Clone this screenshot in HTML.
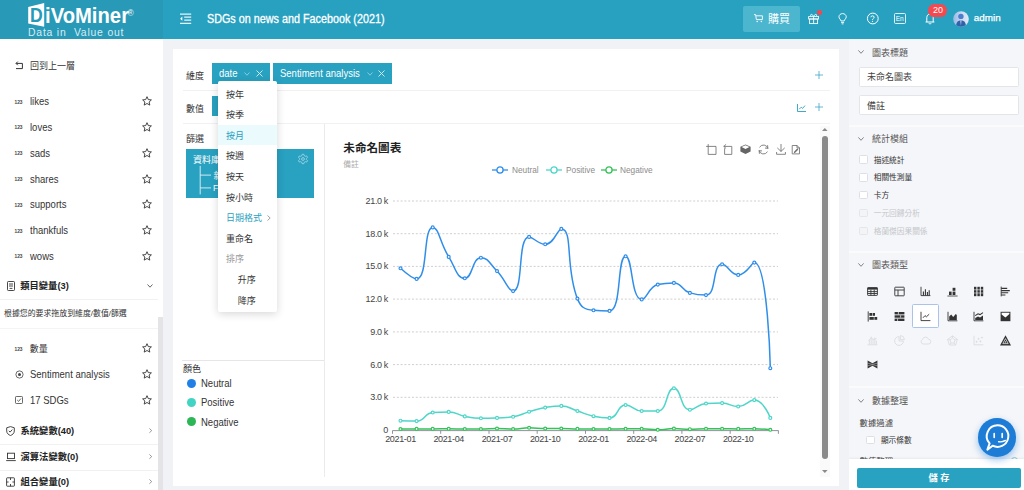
<!DOCTYPE html>
<html lang="zh-Hant">
<head>
<meta charset="utf-8">
<title>DiVoMiner</title>
<style>
*{box-sizing:border-box;margin:0;padding:0}
html,body{width:1024px;height:490px;overflow:hidden;background:#f0f2f5;font-family:"Liberation Sans","Noto Sans CJK TC",sans-serif;font-size:12px;color:#333}
.abs{position:absolute}
#hdr{position:absolute;left:0;top:0;width:1024px;height:39px;background:#28a1c1}
#hdr .logo{position:absolute;left:0;top:0;width:163px;height:39px;background:#2899b7}
#side{position:absolute;left:0;top:39px;width:163px;height:451px;background:#fff}
#card{position:absolute;left:173px;top:49px;width:666.4px;height:437px;background:#fff}
#right{position:absolute;left:849px;top:39px;width:175px;height:451px;background:#f5f6f9;overflow:hidden}
.t{position:absolute;white-space:nowrap;line-height:1}
svg{position:absolute;overflow:visible}
.lat{transform-origin:0 50%;transform:scaleX(0.905)}
.lat2{transform-origin:0 50%;transform:scaleX(0.92)}
.ax{font-family:"Liberation Sans",sans-serif;font-size:9px;fill:#444;letter-spacing:-0.35px}
</style>
</head>
<body>
<div id="hdr"><div class="logo"></div>
<!-- logo -->
<svg width="18" height="25" viewBox="0 0 18 25" style="left:27px;top:2px">
  <path d="M1.2 5 L17.2 1 L17.2 24.8 L1.2 21.6 Z" fill="#fff"/>
</svg>
<div class="t" id="lgD" style="left:29.6px;top:4.6px;font-size:20.5px;font-weight:bold;color:#2899b7;transform-origin:0 0;transform:scaleX(0.86)">D</div>
<div class="t" id="lg1" style="left:44.6px;top:5px;font-size:22.5px;font-weight:bold;color:#fff;transform-origin:0 0;transform:scaleX(0.9)">iVoMiner</div>
<div class="t" style="left:127.6px;top:8.6px;font-size:8.5px;color:#e6f4f8">®</div>
<div class="t" id="lg2" style="left:28px;top:28px;font-size:10.4px;color:#d6edf4;letter-spacing:0.8px">Data in&nbsp; Value out</div>
<!-- menu fold icon -->
<svg width="12" height="12" viewBox="0 0 12 12" style="left:179.8px;top:13px" fill="none" stroke="#e4f3f8" stroke-width="1.2">
  <path d="M0 1.1 H11.2 M4.2 4.2 H11.2 M4.2 7.2 H11.2 M0 10.3 H11.2"/><path d="M2.3 3.6 L0.2 5.7 L2.3 7.8 Z" fill="#fff" stroke="none"/>
</svg>
<div class="t" id="ttl" style="left:207px;top:12.6px;font-size:12.2px;color:#fff;-webkit-text-stroke:0.3px #fff;transform-origin:0 0;transform:scaleX(0.885)">SDGs on news and Facebook (2021)</div>
<!-- buy button -->
<div class="abs" style="left:743px;top:6px;width:57px;height:26px;background:#4db6cf;border-radius:2px"></div>
<svg width="10" height="9" viewBox="0 0 10 9" style="left:753.8px;top:14.4px" fill="none" stroke="#fff" stroke-width="0.9">
  <path d="M0 0.6 H1.6 L2.4 5.6 H8.4 V1.8 H1.9"/><circle cx="3.2" cy="7.4" r="0.75" fill="#fff" stroke="none"/><circle cx="7.4" cy="7.4" r="0.75" fill="#fff" stroke="none"/>
</svg>
<div class="t" style="left:768px;top:14.4px;font-size:11px;color:#fff">購買</div>
<!-- gift -->
<svg width="12" height="12" viewBox="0 0 12 12" style="left:808px;top:12.6px" fill="none" stroke="#fff" stroke-width="0.85">
  <rect x="0.6" y="3.6" width="10" height="2.4"/><rect x="1.6" y="6" width="8" height="4.6"/><path d="M5.6 3.6 V10.6"/>
  <path d="M5.6 3.4 C4 0.2 1.6 1.4 3 3.2 M5.6 3.4 C7.2 0.2 9.6 1.4 8.2 3.2"/>
</svg>
<div class="abs" style="left:817.4px;top:10.4px;width:4.4px;height:4.4px;border-radius:50%;background:#f5474e"></div>
<!-- bulb -->
<svg width="9.2" height="12" viewBox="0 0 10 13" style="left:837.6px;top:12.8px" fill="none" stroke="#fff" stroke-width="1">
  <path d="M3.2 8.6 C3.2 7 1 6.2 1 4.2 C1 2.2 2.8 0.6 5 0.6 C7.2 0.6 9 2.2 9 4.2 C9 6.2 6.8 7 6.8 8.6 Z"/><path d="M3.4 10.2 H6.6 M4 11.8 H6"/>
</svg>
<!-- help -->
<svg width="13" height="13" viewBox="0 0 13 13" style="left:866px;top:12.2px" fill="none" stroke="#fff" stroke-width="1">
  <circle cx="6.8" cy="6.5" r="5.4"/><path d="M4.8 5.2 C4.8 3.4 8.2 3.4 8.2 5.2 C8.2 6.4 6.5 6.4 6.5 7.8"/><circle cx="6.5" cy="9.4" r="0.6" fill="#fff" stroke="none"/>
</svg>
<!-- En -->
<div class="abs" style="left:894px;top:13px;width:11.5px;height:11px;border:1px solid rgba(255,255,255,0.85);border-radius:1.5px"></div>
<div class="t" style="left:895.8px;top:15.6px;font-size:6.5px;color:#fff;letter-spacing:-0.2px">En</div>
<!-- bell -->
<svg width="10" height="12" viewBox="0 0 10 12" style="left:924.5px;top:13px" fill="none" stroke="#fff" stroke-width="1">
  <path d="M0.6 9 H9.4 M1.8 9 V4.6 C1.8 2.4 3.2 1 5 1 C6.8 1 8.2 2.4 8.2 4.6 V9"/><path d="M3.8 10.2 C4.2 11.2 5.8 11.2 6.2 10.2"/>
</svg>
<div class="abs" style="left:928.4px;top:4.2px;width:18.8px;height:12.8px;border-radius:6.4px;background:#f6494f"></div>
<div class="t" style="left:933px;top:6.4px;font-size:9px;color:#fff">20</div>
<!-- avatar -->
<svg width="16" height="16" viewBox="0 0 16 16" style="left:953px;top:10.8px">
  <defs><clipPath id="avc"><circle cx="8" cy="8" r="7.8"/></clipPath><linearGradient id="avg" x1="0" y1="0" x2="1" y2="0"><stop offset="0" stop-color="#96b8e4"/><stop offset="0.55" stop-color="#cfdcf1"/><stop offset="1" stop-color="#dfe8f6"/></linearGradient></defs>
  <circle cx="8" cy="8" r="7.8" fill="url(#avg)"/>
  <g clip-path="url(#avc)"><circle cx="7.9" cy="5.4" r="2.7" fill="#4a7fd0"/><path d="M3 16 C3 10.8 5 9.4 8 9.4 C11 9.4 13 10.8 13 16 Z" fill="#2f62a8"/><path d="M7.2 9.6 L7.9 14.4 L8.6 9.6 Z" fill="#b9cdea"/></g>
</svg>
<div class="t" id="adm" style="left:973.8px;top:12.6px;font-size:9.9px;color:#fff;-webkit-text-stroke:0.25px #fff">admin</div>

</div>
<div id="side">
<svg width="9" height="9" viewBox="0 0 9 9" style="left:14.6px;top:21.9px" fill="none" stroke="#333" stroke-width="1"><path d="M1.2 2.4 H7.4 V7.6 H1"/><path d="M2.8 0.6 L1 2.4 L2.8 4.2"/></svg>
<div class="t " style="left:30.0px;top:23.1px;font-size:9px;">回到上一層</div>
<div class="t" style="left:14.6px;top:61.6px;font-size:4.8px;font-weight:bold;color:#444;letter-spacing:-0.1px">123</div>
<div class="t lat" style="left:29.7px;top:57.2px;font-size:10.5px;">likes</div>
<svg width="10" height="10" viewBox="0 0 10 10" style="left:141.8px;top:57.3px" fill="none" stroke="#333" stroke-width="0.9" stroke-linejoin="round"><path d="M5 0.7 L6.3 3.6 L9.4 3.9 L7.1 6 L7.8 9.1 L5 7.5 L2.2 9.1 L2.9 6 L0.6 3.9 L3.7 3.6 Z"/></svg>
<div class="t" style="left:14.6px;top:87.4px;font-size:4.8px;font-weight:bold;color:#444;letter-spacing:-0.1px">123</div>
<div class="t lat" style="left:29.7px;top:83.0px;font-size:10.5px;">loves</div>
<svg width="10" height="10" viewBox="0 0 10 10" style="left:141.8px;top:83.1px" fill="none" stroke="#333" stroke-width="0.9" stroke-linejoin="round"><path d="M5 0.7 L6.3 3.6 L9.4 3.9 L7.1 6 L7.8 9.1 L5 7.5 L2.2 9.1 L2.9 6 L0.6 3.9 L3.7 3.6 Z"/></svg>
<div class="t" style="left:14.6px;top:113.3px;font-size:4.8px;font-weight:bold;color:#444;letter-spacing:-0.1px">123</div>
<div class="t lat" style="left:29.7px;top:108.9px;font-size:10.5px;">sads</div>
<svg width="10" height="10" viewBox="0 0 10 10" style="left:141.8px;top:109.0px" fill="none" stroke="#333" stroke-width="0.9" stroke-linejoin="round"><path d="M5 0.7 L6.3 3.6 L9.4 3.9 L7.1 6 L7.8 9.1 L5 7.5 L2.2 9.1 L2.9 6 L0.6 3.9 L3.7 3.6 Z"/></svg>
<div class="t" style="left:14.6px;top:139.0px;font-size:4.8px;font-weight:bold;color:#444;letter-spacing:-0.1px">123</div>
<div class="t lat" style="left:29.7px;top:134.7px;font-size:10.5px;">shares</div>
<svg width="10" height="10" viewBox="0 0 10 10" style="left:141.8px;top:134.7px" fill="none" stroke="#333" stroke-width="0.9" stroke-linejoin="round"><path d="M5 0.7 L6.3 3.6 L9.4 3.9 L7.1 6 L7.8 9.1 L5 7.5 L2.2 9.1 L2.9 6 L0.6 3.9 L3.7 3.6 Z"/></svg>
<div class="t" style="left:14.6px;top:164.7px;font-size:4.8px;font-weight:bold;color:#444;letter-spacing:-0.1px">123</div>
<div class="t lat" style="left:29.7px;top:160.3px;font-size:10.5px;">supports</div>
<svg width="10" height="10" viewBox="0 0 10 10" style="left:141.8px;top:160.4px" fill="none" stroke="#333" stroke-width="0.9" stroke-linejoin="round"><path d="M5 0.7 L6.3 3.6 L9.4 3.9 L7.1 6 L7.8 9.1 L5 7.5 L2.2 9.1 L2.9 6 L0.6 3.9 L3.7 3.6 Z"/></svg>
<div class="t" style="left:14.6px;top:190.5px;font-size:4.8px;font-weight:bold;color:#444;letter-spacing:-0.1px">123</div>
<div class="t lat" style="left:29.7px;top:186.2px;font-size:10.5px;">thankfuls</div>
<svg width="10" height="10" viewBox="0 0 10 10" style="left:141.8px;top:186.2px" fill="none" stroke="#333" stroke-width="0.9" stroke-linejoin="round"><path d="M5 0.7 L6.3 3.6 L9.4 3.9 L7.1 6 L7.8 9.1 L5 7.5 L2.2 9.1 L2.9 6 L0.6 3.9 L3.7 3.6 Z"/></svg>
<div class="t" style="left:14.6px;top:216.2px;font-size:4.8px;font-weight:bold;color:#444;letter-spacing:-0.1px">123</div>
<div class="t lat" style="left:29.7px;top:211.9px;font-size:10.5px;">wows</div>
<svg width="10" height="10" viewBox="0 0 10 10" style="left:141.8px;top:211.9px" fill="none" stroke="#333" stroke-width="0.9" stroke-linejoin="round"><path d="M5 0.7 L6.3 3.6 L9.4 3.9 L7.1 6 L7.8 9.1 L5 7.5 L2.2 9.1 L2.9 6 L0.6 3.9 L3.7 3.6 Z"/></svg>
<svg width="8" height="10" viewBox="0 0 8 10" style="left:6.8px;top:242.1px" fill="none" stroke="#333" stroke-width="0.9"><rect x="0.5" y="0.5" width="7" height="9" rx="0.8"/><path d="M2 3 H6 M2 5 H6 M2.6 7.4 H5.4"/></svg>
<div class="t " style="left:20.2px;top:243.4px;font-size:9.3px;font-weight:bold;color:#222">類目變量(3)</div>
<svg width="6" height="4" viewBox="0 0 6 4" style="left:147px;top:245.1px" fill="none" stroke="#555" stroke-width="0.9"><path d="M0.5 0.5 L3 3.2 L5.5 0.5"/></svg>
<div class="abs" style="left:0;top:260.0px;width:158px;height:1px;background:#f1f1f1"></div>
<div class="t " style="left:4.0px;top:271.3px;font-size:7.9px;color:#333">根據您的要求拖放到維度/數值/篩選</div>
<div class="abs" style="left:0;top:288.5px;width:158px;height:1px;background:#f4f4f4"></div>
<div class="abs" style="left:158px;top:278.0px;width:5px;height:174px;background:#e4e4e6"></div>
<div class="t" style="left:14.6px;top:308.6px;font-size:4.8px;font-weight:bold;color:#444;letter-spacing:-0.1px">123</div>
<div class="t " style="left:29.8px;top:305.9px;font-size:9px;">數量</div>
<svg width="10" height="10" viewBox="0 0 10 10" style="left:141.8px;top:304.3px" fill="none" stroke="#333" stroke-width="0.9" stroke-linejoin="round"><path d="M5 0.7 L6.3 3.6 L9.4 3.9 L7.1 6 L7.8 9.1 L5 7.5 L2.2 9.1 L2.9 6 L0.6 3.9 L3.7 3.6 Z"/></svg>
<svg width="9" height="9" viewBox="0 0 9 9" style="left:14.5px;top:331.0px" fill="none" stroke="#444" stroke-width="0.8"><circle cx="4.5" cy="4.5" r="3.6"/><circle cx="4.5" cy="4.5" r="1.5" fill="#444" stroke="none"/></svg>
<div class="t lat" style="left:29.7px;top:330.2px;font-size:10.5px;">Sentiment analysis</div>
<svg width="10" height="10" viewBox="0 0 10 10" style="left:141.8px;top:330.3px" fill="none" stroke="#333" stroke-width="0.9" stroke-linejoin="round"><path d="M5 0.7 L6.3 3.6 L9.4 3.9 L7.1 6 L7.8 9.1 L5 7.5 L2.2 9.1 L2.9 6 L0.6 3.9 L3.7 3.6 Z"/></svg>
<svg width="8" height="8" viewBox="0 0 8 8" style="left:15px;top:357.2px" fill="none" stroke="#444" stroke-width="0.8"><rect x="0.5" y="0.5" width="7" height="7" rx="0.8"/><path d="M2.2 4 L3.6 5.4 L5.9 2.6"/></svg>
<div class="t lat" style="left:29.7px;top:355.9px;font-size:10.5px;">17 SDGs</div>
<svg width="10" height="10" viewBox="0 0 10 10" style="left:141.8px;top:356.0px" fill="none" stroke="#333" stroke-width="0.9" stroke-linejoin="round"><path d="M5 0.7 L6.3 3.6 L9.4 3.9 L7.1 6 L7.8 9.1 L5 7.5 L2.2 9.1 L2.9 6 L0.6 3.9 L3.7 3.6 Z"/></svg>
<svg width="9" height="10" viewBox="0 0 9 10" style="left:6.4px;top:386.7px" fill="none" stroke="#333" stroke-width="0.9"><path d="M4.5 0.6 L8.3 1.8 V5 C8.3 7.4 6.4 8.8 4.5 9.5 C2.6 8.8 0.7 7.4 0.7 5 V1.8 Z"/><path d="M2.8 4.8 L4.1 6.1 L6.3 3.6"/></svg><div class="t " style="left:20.5px;top:388.0px;font-size:9.3px;font-weight:bold;color:#222">系統變數(40)</div><svg width="3.4" height="5.2" viewBox="0 0 4 6" style="left:148.6px;top:388.7px" fill="none" stroke="#777" stroke-width="0.9"><path d="M0.5 0.5 L3.2 3 L0.5 5.5"/></svg>
<div class="abs" style="left:0;top:404.6px;width:158px;height:1px;background:#f1f1f1"></div>
<svg width="10" height="10" viewBox="0 0 10 10" style="left:6px;top:412.7px" fill="none" stroke="#333" stroke-width="0.9"><rect x="1.5" y="1.2" width="7" height="5.4"/><path d="M0.2 8.6 H9.8"/></svg><div class="t " style="left:20.5px;top:414.0px;font-size:9.3px;font-weight:bold;color:#222">演算法變數(0)</div><svg width="3.4" height="5.2" viewBox="0 0 4 6" style="left:148.6px;top:414.7px" fill="none" stroke="#777" stroke-width="0.9"><path d="M0.5 0.5 L3.2 3 L0.5 5.5"/></svg>
<div class="abs" style="left:0;top:430.6px;width:158px;height:1px;background:#f1f1f1"></div>
<svg width="9" height="10" viewBox="0 0 9 10" style="left:6.4px;top:438.0px" fill="none" stroke="#333" stroke-width="0.9"><rect x="0.6" y="0.8" width="7.8" height="8.4" rx="0.6"/><path d="M4.5 0.8 V3 M4.5 7 V9.2 M0.6 5 H2.6 M6.4 5 H8.4"/></svg><div class="t " style="left:20.5px;top:439.3px;font-size:9.3px;font-weight:bold;color:#222">組合變量(0)</div><svg width="3.4" height="5.2" viewBox="0 0 4 6" style="left:148.6px;top:440.0px" fill="none" stroke="#777" stroke-width="0.9"><path d="M0.5 0.5 L3.2 3 L0.5 5.5"/></svg>
</div>
<div id="card">
<div class="t " style="left:13.1px;top:22.6px;font-size:9px;">維度</div>
<div class="abs" style="left:39.0px;top:14.0px;width:58.0px;height:21.0px;background:#29a1c0"></div>
<div class="t lat" style="left:45.7px;top:19.3px;font-size:10.5px;color:#fff">date</div>
<svg width="6" height="4" viewBox="0 0 6 4" style="left:71.0px;top:22.8px" fill="none" stroke="#8fd0e2" stroke-width="0.9"><path d="M0.5 0.5 L3 3.2 L5.5 0.5"/></svg>
<svg width="7" height="7" viewBox="0 0 7 7" style="left:82.6px;top:21.0px" fill="none" stroke="#d9f0f6" stroke-width="0.9"><path d="M0.5 0.5 L6.5 6.5 M6.5 0.5 L0.5 6.5"/></svg>
<div class="abs" style="left:100.0px;top:14.0px;width:119.0px;height:21.0px;background:#29a1c0"></div>
<div class="t lat" style="left:106.8px;top:19.3px;font-size:10.5px;color:#fff">Sentiment analysis</div>
<svg width="6" height="4" viewBox="0 0 6 4" style="left:193.6px;top:22.8px" fill="none" stroke="#8fd0e2" stroke-width="0.9"><path d="M0.5 0.5 L3 3.2 L5.5 0.5"/></svg>
<svg width="7" height="7" viewBox="0 0 7 7" style="left:205.0px;top:21.0px" fill="none" stroke="#d9f0f6" stroke-width="0.9"><path d="M0.5 0.5 L6.5 6.5 M6.5 0.5 L0.5 6.5"/></svg>
<svg width="8" height="8" viewBox="0 0 8 8" style="left:641.5px;top:21.5px" fill="none" stroke="#3aa6c5" stroke-width="0.8"><path d="M4 0 V8 M0 4 H8"/></svg>
<div class="abs" style="left:9.5px;top:41.3px;width:647.5px;height:1.2px;background:#f1f1f1"></div>
<div class="t " style="left:13.1px;top:55.6px;font-size:9px;">數值</div>
<div class="abs" style="left:39.0px;top:47.1px;width:48.0px;height:20.0px;background:#29a1c0"></div>
<svg width="9" height="8" viewBox="0 0 9 8" style="left:623.5px;top:54.5px" fill="none" stroke="#2f9fc0" stroke-width="0.9"><path d="M0.5 0 V7.5 H9"/><path d="M2.2 5.2 L4.2 3.2 L5.6 4.4 L8 1.6"/></svg>
<svg width="8" height="8" viewBox="0 0 8 8" style="left:641.5px;top:54.2px" fill="none" stroke="#3aa6c5" stroke-width="0.8"><path d="M4 0 V8 M0 4 H8"/></svg>
<div class="abs" style="left:9.5px;top:74.3px;width:647.0px;height:1.1px;background:#f1f1f1"></div>
<div class="t " style="left:13.1px;top:85.8px;font-size:9px;">篩選</div>
<div class="abs" style="left:13.1px;top:99.8px;width:128.1px;height:48.9px;background:#29a1c0"></div>
<div class="t " style="left:19.9px;top:106.5px;font-size:9px;color:#fff">資料庫</div>
<svg width="14" height="30" viewBox="0 0 14 30" style="left:26.0px;top:116.0px" fill="none" stroke="#e2f3f8" stroke-width="0.9"><path d="M1.2 0.9 V29.4 M1.2 10.1 H12 M1.2 22.9 H12"/></svg>
<div class="t " style="left:40.4px;top:122.5px;font-size:9px;color:#fff">新聞</div>
<div class="t lat" style="left:40.4px;top:134.2px;font-size:9.5px;color:#fff">Facebook</div>
<svg width="10" height="10" viewBox="0 0 10 10" style="left:125.2px;top:105.1px" fill="none" stroke="#a9dbe8" stroke-width="0.8" stroke-linejoin="round"><circle cx="5" cy="5" r="1.4"/><path d="M4.20 0.27 L5.80 0.27 L6.22 1.72 L7.23 2.30 L8.70 1.94 L9.50 3.33 L8.45 4.42 L8.45 5.58 L9.50 6.67 L8.70 8.06 L7.23 7.70 L6.22 8.28 L5.80 9.73 L4.20 9.73 L3.78 8.28 L2.77 7.70 L1.30 8.06 L0.50 6.67 L1.55 5.58 L1.55 4.42 L0.50 3.33 L1.30 1.94 L2.77 2.30 L3.78 1.72 Z"/></svg>
<div class="abs" style="left:150.8px;top:74.8px;width:1.0px;height:353.4px;background:#ebebeb"></div>
<div class="abs" style="left:9.2px;top:310.7px;width:141.8px;height:1.0px;background:#e6e6e6"></div>
<div class="t " style="left:10.1px;top:315.9px;font-size:9px;">顏色</div>
<div class="abs" style="left:13.8px;top:329.6px;width:9.2px;height:9.2px;background:#2080e5;border-radius:50%"></div>
<div class="t lat" style="left:28.2px;top:328.9px;font-size:10.5px;">Neutral</div>
<div class="abs" style="left:13.8px;top:348.9px;width:9.2px;height:9.2px;background:#42d4c3;border-radius:50%"></div>
<div class="t lat" style="left:28.2px;top:348.2px;font-size:10.5px;">Positive</div>
<div class="abs" style="left:13.8px;top:368.2px;width:9.2px;height:9.2px;background:#2db656;border-radius:50%"></div>
<div class="t lat" style="left:28.2px;top:367.6px;font-size:10.5px;">Negative</div>
<div class="t " style="left:170.3px;top:93.3px;font-size:11.6px;font-weight:bold;color:#222">未命名圖表</div>
<div class="t " style="left:170.3px;top:112.0px;font-size:7.8px;color:#aaa">備註</div>
<svg width="11" height="11" viewBox="0 0 11 11" style="left:533.0px;top:95.2px" fill="none" stroke="#707070" stroke-width="0.85" stroke-linejoin="round" stroke-linecap="round"><path d="M0.5 2.4 H10 V10.4 H2.2 V0.5"/></svg>
<svg width="10" height="11" viewBox="0 0 10 11" style="left:550.4px;top:95.2px" fill="none" stroke="#707070" stroke-width="0.85" stroke-linejoin="round" stroke-linecap="round"><path d="M1.6 4.6 V10.4 H8.8 V2.4 H1"/><path d="M2.8 0.6 L0.8 2.4 L2.8 4.2"/></svg>
<svg width="11" height="10.5" viewBox="0 0 11 10.5" style="left:566.8px;top:95.2px" ><path d="M5.5 0.4 L10.6 2.8 V7.4 L5.5 10.1 L0.4 7.4 V2.8 Z" fill="#666" stroke="none"/><path d="M5.5 1.3 L9.4 3.1 L5.5 5 L1.6 3.1 Z" fill="#fff" stroke="none"/></svg>
<svg width="11" height="11" viewBox="0 0 11 11" style="left:584.8px;top:94.9px" fill="none" stroke="#707070" stroke-width="0.85" stroke-linejoin="round" stroke-linecap="round"><path d="M9.9 4.3 A4.6 4.6 0 0 0 1.7 3 M1.1 6.7 A4.6 4.6 0 0 0 9.3 8"/><path d="M9.6 1.6 L9.9 4.3 L7.4 4.1" /><path d="M1.4 9.4 L1.1 6.7 L3.6 6.9"/></svg>
<svg width="10" height="11" viewBox="0 0 10 11" style="left:602.8px;top:95.2px" fill="none" stroke="#707070" stroke-width="0.85" stroke-linejoin="round" stroke-linecap="round"><path d="M5 0.4 V7.2 M1.6 4.2 L5 7.4 L8.4 4.2 M0.6 8.4 V10.3 H9.4 V8.4"/></svg>
<svg width="8" height="9.4" viewBox="0 0 8 9.4" style="left:619.4px;top:96.0px" fill="none" stroke="#707070" stroke-width="0.85" stroke-linejoin="round" stroke-linecap="round"><path d="M0.6 0.5 H5 L7.5 3 V8.9 H0.6 Z"/><path d="M5 0.5 V3 H7.5"/><path d="M2.6 7.2 L5.4 4.4" stroke-width="1.5"/></svg>
<svg width="16" height="8" viewBox="0 0 16 8" style="left:318.9px;top:116.8px" fill="none" stroke="#2f8ee9" stroke-width="1.3"><path d="M0 4 H16"/><circle cx="8" cy="4" r="3.1" fill="#fff"/></svg>
<div class="t lat2" style="left:338.7px;top:117.2px;font-size:9px;color:#8c8c8c">Neutral</div>
<svg width="16" height="8" viewBox="0 0 16 8" style="left:372.9px;top:116.8px" fill="none" stroke="#4fd6c8" stroke-width="1.3"><path d="M0 4 H16"/><circle cx="8" cy="4" r="3.1" fill="#fff"/></svg>
<div class="t lat2" style="left:392.9px;top:117.2px;font-size:9px;color:#8c8c8c">Positive</div>
<svg width="16" height="8" viewBox="0 0 16 8" style="left:427.5px;top:116.8px" fill="none" stroke="#35c25a" stroke-width="1.3"><path d="M0 4 H16"/><circle cx="8" cy="4" r="3.1" fill="#fff"/></svg>
<div class="t lat2" style="left:447.4px;top:117.2px;font-size:9px;color:#8c8c8c">Negative</div>
<div class="abs" style="left:646.8px;top:77.0px;width:9.8px;height:351.1px;background:#fafafa"></div>
<div class="abs" style="left:649.0px;top:86.6px;width:5.5px;height:323.5px;background:#8a8a8a;border-radius:3px"></div>
<svg width="5.6" height="3" viewBox="0 0 6 3" style="left:649.0px;top:78.9px" ><path d="M0 3 L3 0 L6 3 Z" fill="#8a8a8a"/></svg>
<svg width="5.6" height="3" viewBox="0 0 6 3" style="left:649.0px;top:421.2px" ><path d="M0 0 L3 3 L6 0 Z" fill="#8a8a8a"/></svg>
</div>
<div id="right">
<svg width="6" height="4" viewBox="0 0 6 4" style="left:8.6px;top:11.4px" fill="none" stroke="#666" stroke-width="0.8"><path d="M0.4 0.4 L3 3.3 L5.6 0.4"/></svg><div class="t " style="left:22.9px;top:9.5px;font-size:9px;color:#555">圖表標題</div>
<div class="abs" style="left:10.3px;top:27.5px;width:159.6px;height:20.0px;background:#fff;border:1px solid #e3e5e8;border-radius:1.5px"></div>
<div class="t " style="left:18.0px;top:34.4px;font-size:9px;color:#444">未命名圖表</div>
<div class="abs" style="left:10.3px;top:55.5px;width:159.6px;height:20.2px;background:#fff;border:1px solid #e3e5e8;border-radius:1.5px"></div>
<div class="t " style="left:18.0px;top:63.0px;font-size:9px;color:#444">備註</div>
<div class="abs" style="left:0.0px;top:85.6px;width:175.0px;height:2.0px;background:#fbfbfc"></div>
<svg width="6" height="4" viewBox="0 0 6 4" style="left:8.6px;top:98.1px" fill="none" stroke="#666" stroke-width="0.8"><path d="M0.4 0.4 L3 3.3 L5.6 0.4"/></svg><div class="t " style="left:22.9px;top:96.2px;font-size:9px;color:#555">統計模組</div>
<div class="abs" style="left:10.4px;top:116.2px;width:8.6px;height:8.6px;background:#fff;border:1px solid #dcdfe6;border-radius:1.5px"></div>
<div class="t " style="left:24.7px;top:117.5px;font-size:7.7px;color:#333">描述統計</div>
<div class="abs" style="left:10.4px;top:134.0px;width:8.6px;height:8.6px;background:#fff;border:1px solid #dcdfe6;border-radius:1.5px"></div>
<div class="t " style="left:24.7px;top:135.3px;font-size:7.7px;color:#333">相關性測量</div>
<div class="abs" style="left:10.4px;top:151.9px;width:8.6px;height:8.6px;background:#fff;border:1px solid #dcdfe6;border-radius:1.5px"></div>
<div class="t " style="left:24.7px;top:153.2px;font-size:7.7px;color:#333">卡方</div>
<div class="abs" style="left:10.4px;top:169.8px;width:8.6px;height:8.6px;background:#f3f4f6;border:1px solid #e4e6ea;border-radius:1.5px"></div>
<div class="t " style="left:24.7px;top:171.1px;font-size:7.7px;color:#c4c6ca">一元回歸分析</div>
<div class="abs" style="left:10.4px;top:187.8px;width:8.6px;height:8.6px;background:#f3f4f6;border:1px solid #e4e6ea;border-radius:1.5px"></div>
<div class="t " style="left:24.7px;top:189.1px;font-size:7.7px;color:#c4c6ca">格蘭傑因果關係</div>
<div class="abs" style="left:0.0px;top:211.7px;width:175.0px;height:2.0px;background:#fbfbfc"></div>
<svg width="6" height="4" viewBox="0 0 6 4" style="left:8.6px;top:223.9px" fill="none" stroke="#666" stroke-width="0.8"><path d="M0.4 0.4 L3 3.3 L5.6 0.4"/></svg><div class="t " style="left:22.9px;top:222.0px;font-size:9px;color:#555">圖表類型</div>
<div class="abs" style="left:63.2px;top:265.2px;width:26.6px;height:24.3px;background:#fff;border:1px solid #a9c4e8;border-radius:1.5px"></div>
<svg width="11" height="11" viewBox="0 0 11 11" style="left:18.0px;top:247.1px" fill="none" stroke="#333" stroke-width="0.9"><rect x="0.6" y="1.6" width="9.8" height="7.8" rx="0.5"/><rect x="0.6" y="1.6" width="9.8" height="2" fill="#333" stroke="none"/><path d="M0.6 5.6 H10.4 M0.6 7.5 H10.4 M3.9 3.6 V9.4 M7.2 3.6 V9.4"/></svg>
<svg width="11" height="11" viewBox="0 0 11 11" style="left:44.5px;top:247.1px" fill="none" stroke="#333" stroke-width="0.9"><rect x="0.8" y="1.2" width="9.4" height="8.6" rx="0.5"/><path d="M0.8 4 H10.2 M4 4 V9.8"/></svg>
<svg width="11" height="11" viewBox="0 0 11 11" style="left:71.2px;top:247.1px" fill="none" stroke="#333" stroke-width="0.9"><path d="M1 0.8 V9.6 H10.4"/><path d="M3.4 9.4 V5.4 M5.4 9.4 V3.2 M7.4 9.4 V6 M9.2 9.4 V4.2" stroke-width="1.1"/></svg>
<svg width="11" height="11" viewBox="0 0 11 11" style="left:97.9px;top:247.1px" ><path d="M0.4 10 H10.6" fill="none" stroke="#333" stroke-width="0.8"/><rect x="2" y="5.6" width="2.6" height="3.4" fill="#333"/><rect x="5.6" y="5.6" width="2.8" height="3.4" fill="#333"/><rect x="5.6" y="1.8" width="2.8" height="3" fill="#333"/></svg>
<svg width="11" height="11" viewBox="0 0 11 11" style="left:124.4px;top:247.1px" ><rect x="1" y="0.8" width="2.4" height="9.4" fill="#333"/><rect x="4.4" y="0.8" width="2.4" height="9.4" fill="#333"/><rect x="7.8" y="0.8" width="2.4" height="9.4" fill="#333"/><path d="M1 3.8 H10.2 M1 7 H10.2" stroke="#f5f6f9" stroke-width="0.6"/></svg>
<svg width="11" height="11" viewBox="0 0 11 11" style="left:150.9px;top:247.1px" fill="none" stroke="#333" stroke-width="0.9"><path d="M1.2 0.6 V10.4"/><path d="M1.2 2.4 H7.2 M1.2 4.6 H9.8 M1.2 6.8 H8.2 M1.2 9 H5.4" stroke-width="1.1"/></svg>
<svg width="11" height="11" viewBox="0 0 11 11" style="left:18.0px;top:271.8px" ><path d="M1.2 0.4 V10.6" fill="none" stroke="#333" stroke-width="0.9"/><rect x="2.4" y="2" width="3" height="2.8" fill="#333"/><rect x="6" y="2" width="2" height="2.8" fill="#333"/><rect x="2.4" y="6" width="4.4" height="2.8" fill="#333"/><rect x="7.4" y="6" width="2.8" height="2.8" fill="#333"/></svg>
<svg width="11" height="11" viewBox="0 0 11 11" style="left:44.5px;top:271.8px" ><rect x="0.6" y="1" width="9.8" height="2.4" fill="#333"/><rect x="0.6" y="4.3" width="9.8" height="2.4" fill="#333"/><rect x="0.6" y="7.6" width="9.8" height="2.4" fill="#333"/><path d="M4.4 1 V3.4 M6.6 4.3 V6.7 M3.6 7.6 V10" stroke="#f5f6f9" stroke-width="0.7"/></svg>
<svg width="11" height="11" viewBox="0 0 11 11" style="left:71.2px;top:271.8px" fill="none" stroke="#333" stroke-width="0.9"><path d="M1 0.8 V9.6 H10.4"/><path d="M3 6.8 L5 4.6 L6.4 5.8 L9.2 3.2"/></svg>
<svg width="11" height="11" viewBox="0 0 11 11" style="left:97.9px;top:271.8px" ><path d="M1 0.8 V9.8 H10.4" fill="none" stroke="#333" stroke-width="0.9"/><path d="M2.2 9 V5.6 L4.2 3.6 L6.2 6 L8.8 3 L9.8 4 V9 Z" fill="#333"/></svg>
<svg width="11" height="11" viewBox="0 0 11 11" style="left:124.4px;top:271.8px" ><path d="M1 0.8 V9.8 H10.4" fill="none" stroke="#333" stroke-width="0.9"/><path d="M2.2 9 V7 L5 5.6 L7 6.4 L10 4.4 V9 Z" fill="#333"/><path d="M2.2 4.6 L5 2.8 L7 3.6 L10 1.6" fill="none" stroke="#333" stroke-width="1.1"/></svg>
<svg width="11" height="11" viewBox="0 0 11 11" style="left:150.9px;top:271.8px" ><rect x="0.6" y="0.8" width="9.8" height="9.4" fill="#333"/><path d="M1.6 3.6 L5.4 6.6 L9.4 3 V1.8 H1.6 Z" fill="#fff"/></svg>
<svg width="11" height="11" viewBox="0 0 11 11" style="left:18.0px;top:296.3px" fill="none" stroke="#dcdde0" stroke-width="0.9"><path d="M0.6 9.8 H10.4 M2.4 9.6 V4.6 M4.2 9.6 V1.6 M6 9.6 V3.6 M7.8 9.6 V2.6 M9.4 9.6 V5.6"/><path d="M1.6 6 L4.2 2.6 L6.4 4.8 L9.6 3.4"/></svg>
<svg width="11" height="11" viewBox="0 0 11 11" style="left:44.5px;top:296.3px" fill="none" stroke="#dcdde0" stroke-width="0.9"><path d="M5 1.6 A4.4 4.4 0 1 0 9.4 6 H5 Z"/><path d="M6.4 0.6 A4 4 0 0 1 10.4 4.6 H6.4 Z"/></svg>
<svg width="11" height="11" viewBox="0 0 11 11" style="left:71.2px;top:296.3px" fill="none" stroke="#dcdde0" stroke-width="0.9"><path d="M3 9 A2.4 2.4 0 0 1 2.6 4.4 A3 3 0 0 1 8.4 4.2 A2.4 2.4 0 0 1 8.4 9 Z"/></svg>
<svg width="11" height="11" viewBox="0 0 11 11" style="left:97.9px;top:296.3px" fill="none" stroke="#dcdde0" stroke-width="0.9"><path d="M5.5 0.8 L10.4 4.4 L8.6 10 H2.4 L0.6 4.4 Z"/><path d="M5.5 3 L8 5 L7 8 H4 L3 5 Z M5.5 0.8 V3 M10.4 4.4 L8 5 M8.6 10 L7 8 M2.4 10 L4 8 M0.6 4.4 L3 5"/></svg>
<svg width="11" height="11" viewBox="0 0 11 11" style="left:124.4px;top:296.3px" fill="none" stroke="#dcdde0" stroke-width="0.9"><path d="M1 0.8 V9.8 H10.4"/><circle cx="3.6" cy="6.8" r="0.6" fill="#dcdde0"/><circle cx="5.6" cy="3.8" r="0.6" fill="#dcdde0"/><circle cx="7.4" cy="6.4" r="0.6" fill="#dcdde0"/><circle cx="9" cy="2.6" r="0.6" fill="#dcdde0"/></svg>
<svg width="11" height="11" viewBox="0 0 11 11" style="left:150.9px;top:296.3px" ><path d="M5.5 0.2 L11 10.4 H0 Z" fill="#333"/><path d="M5.5 3.6 L8.2 8.6 H2.8 Z" fill="none" stroke="#f5f6f9" stroke-width="0.7"/><path d="M5.5 6 L6.4 7.6 H4.6 Z" fill="#f5f6f9"/></svg>
<svg width="11" height="11" viewBox="0 0 11 11" style="left:18.0px;top:320.3px" ><path d="M0.6 1.6 L5.5 4.2 L10.4 1.6 V9.4 L5.5 6.8 L0.6 9.4 Z" fill="#333"/><path d="M0.6 4.2 L5.5 5.3 L10.4 4.2 M0.6 6.8 L5.5 5.7 L10.4 6.8" fill="none" stroke="#f5f6f9" stroke-width="0.4"/></svg>
<div class="abs" style="left:0.0px;top:347.4px;width:175.0px;height:2.0px;background:#fbfbfc"></div>
<svg width="6" height="4" viewBox="0 0 6 4" style="left:8.6px;top:360.1px" fill="none" stroke="#666" stroke-width="0.8"><path d="M0.4 0.4 L3 3.3 L5.6 0.4"/></svg><div class="t " style="left:22.9px;top:358.2px;font-size:9px;color:#555">數據整理</div>
<div class="t " style="left:10.6px;top:379.6px;font-size:8.4px;color:#444">數據過濾</div>
<div class="abs" style="left:17.3px;top:396.9px;width:8.6px;height:8.6px;background:#fff;border:1px solid #dcdfe6;border-radius:1.5px"></div>
<div class="t " style="left:31.9px;top:398.1px;font-size:7.7px;color:#333">顯示條數</div>
<div class="abs" style="left:10.6px;top:416.6px;width:60px;height:4px;overflow:hidden"><div class="t" style="left:0;top:1.4px;font-size:8.4px;color:#444">數值整理</div></div>
<svg width="7" height="7" viewBox="0 0 7 7" style="left:161.9px;top:418.2px" fill="none" stroke="#6fbcd3" stroke-width="0.8"><circle cx="3.5" cy="3.5" r="3"/></svg>
<div class="abs" style="left:0.0px;top:420.4px;width:175.0px;height:30.6px;background:#fff;box-shadow:0 -1px 2px rgba(0,0,0,0.06)"></div>
<div class="abs" style="left:7.7px;top:428.6px;width:164.6px;height:20.2px;background:#29a1c0;border-radius:2px"></div>
<div class="t " style="left:79.4px;top:434.9px;font-size:9.2px;color:#fff;font-weight:bold">儲</div>
<div class="t " style="left:91.3px;top:434.9px;font-size:9.2px;color:#fff;font-weight:bold">存</div>
</div>
<svg width="1024" height="490" style="left:0;top:0;pointer-events:none" viewBox="0 0 1024 490">
<line x1="393" x2="778" y1="397.3" y2="397.3" stroke="#cfcfcf" stroke-width="1" stroke-dasharray="2,1.8"/>
<line x1="393" x2="778" y1="364.6" y2="364.6" stroke="#cfcfcf" stroke-width="1" stroke-dasharray="2,1.8"/>
<line x1="393" x2="778" y1="331.9" y2="331.9" stroke="#cfcfcf" stroke-width="1" stroke-dasharray="2,1.8"/>
<line x1="393" x2="778" y1="299.1" y2="299.1" stroke="#cfcfcf" stroke-width="1" stroke-dasharray="2,1.8"/>
<line x1="393" x2="778" y1="266.4" y2="266.4" stroke="#cfcfcf" stroke-width="1" stroke-dasharray="2,1.8"/>
<line x1="393" x2="778" y1="233.7" y2="233.7" stroke="#cfcfcf" stroke-width="1" stroke-dasharray="2,1.8"/>
<line x1="393" x2="778" y1="201.0" y2="201.0" stroke="#cfcfcf" stroke-width="1" stroke-dasharray="2,1.8"/>
<line x1="392.5" x2="778.5" y1="430.6" y2="430.6" stroke="#85878e" stroke-width="0.9"/>
<line x1="392.5" x2="392.5" y1="430.6" y2="433.8" stroke="#85878e" stroke-width="0.9"/>
<line x1="440.7" x2="440.7" y1="430.6" y2="433.8" stroke="#85878e" stroke-width="0.9"/>
<line x1="489.0" x2="489.0" y1="430.6" y2="433.8" stroke="#85878e" stroke-width="0.9"/>
<line x1="537.2" x2="537.2" y1="430.6" y2="433.8" stroke="#85878e" stroke-width="0.9"/>
<line x1="585.5" x2="585.5" y1="430.6" y2="433.8" stroke="#85878e" stroke-width="0.9"/>
<line x1="633.7" x2="633.7" y1="430.6" y2="433.8" stroke="#85878e" stroke-width="0.9"/>
<line x1="681.9" x2="681.9" y1="430.6" y2="433.8" stroke="#85878e" stroke-width="0.9"/>
<line x1="730.2" x2="730.2" y1="430.6" y2="433.8" stroke="#85878e" stroke-width="0.9"/>
<line x1="778.4" x2="778.4" y1="430.6" y2="433.8" stroke="#85878e" stroke-width="0.9"/>
<text x="388" y="433.0" text-anchor="end" class="ax">0</text>
<text x="388" y="400.3" text-anchor="end" class="ax">3.0 k</text>
<text x="388" y="367.6" text-anchor="end" class="ax">6.0 k</text>
<text x="388" y="334.9" text-anchor="end" class="ax">9.0 k</text>
<text x="388" y="302.1" text-anchor="end" class="ax">12.0 k</text>
<text x="388" y="269.4" text-anchor="end" class="ax">15.0 k</text>
<text x="388" y="236.7" text-anchor="end" class="ax">18.0 k</text>
<text x="388" y="204.0" text-anchor="end" class="ax">21.0 k</text>
<text x="400.5" y="442" text-anchor="middle" class="ax">2021-01</text>
<text x="448.7" y="442" text-anchor="middle" class="ax">2021-04</text>
<text x="497.0" y="442" text-anchor="middle" class="ax">2021-07</text>
<text x="545.2" y="442" text-anchor="middle" class="ax">2021-10</text>
<text x="593.5" y="442" text-anchor="middle" class="ax">2022-01</text>
<text x="641.7" y="442" text-anchor="middle" class="ax">2022-04</text>
<text x="689.9" y="442" text-anchor="middle" class="ax">2022-07</text>
<text x="738.2" y="442" text-anchor="middle" class="ax">2022-10</text>
<path d="M400.50,268.30 C400.50,268.30 412.35,278.90 416.58,278.90 C428.43,278.90 422.75,227.40 432.66,227.40 C438.83,227.40 439.79,242.74 448.74,256.90 C455.87,268.19 456.68,278.30 464.82,278.30 C472.76,278.30 471.97,257.70 480.90,257.70 C488.05,257.70 489.76,263.60 496.98,271.10 C505.84,280.30 508.04,291.10 513.06,291.10 C524.12,291.10 516.89,236.90 529.14,236.90 C532.97,236.90 538.10,244.30 545.22,244.30 C554.18,244.30 557.48,228.90 561.30,228.90 C573.56,228.90 564.80,266.75 577.38,298.60 C580.88,307.45 584.57,309.56 593.46,310.30 C600.65,310.90 606.00,310.90 609.54,310.90 C622.08,310.90 616.73,256.30 625.62,256.30 C632.81,256.30 630.80,299.40 641.70,299.40 C646.88,299.40 648.54,286.90 657.78,284.60 C664.62,282.90 666.45,282.90 673.86,282.90 C682.53,282.90 681.28,290.33 689.94,292.90 C697.36,295.10 700.90,295.10 706.02,295.10 C716.98,295.10 711.75,264.30 722.10,264.30 C727.83,264.30 730.34,274.90 738.18,274.90 C746.42,274.90 751.70,262.60 754.26,262.60 C767.78,262.60 770.34,368.20 770.34,368.20" fill="none" stroke="#2f8ee9" stroke-width="1.5" stroke-linejoin="round"/><g fill="#fff" stroke="#2f8ee9" stroke-width="1.2"><circle cx="400.5" cy="268.3" r="1.45"/><circle cx="416.6" cy="278.9" r="1.45"/><circle cx="432.7" cy="227.4" r="1.45"/><circle cx="448.7" cy="256.9" r="1.45"/><circle cx="464.8" cy="278.3" r="1.45"/><circle cx="480.9" cy="257.7" r="1.45"/><circle cx="497.0" cy="271.1" r="1.45"/><circle cx="513.1" cy="291.1" r="1.45"/><circle cx="529.1" cy="236.9" r="1.45"/><circle cx="545.2" cy="244.3" r="1.45"/><circle cx="561.3" cy="228.9" r="1.45"/><circle cx="577.4" cy="298.6" r="1.45"/><circle cx="593.5" cy="310.3" r="1.45"/><circle cx="609.5" cy="310.9" r="1.45"/><circle cx="625.6" cy="256.3" r="1.45"/><circle cx="641.7" cy="299.4" r="1.45"/><circle cx="657.8" cy="284.6" r="1.45"/><circle cx="673.9" cy="282.9" r="1.45"/><circle cx="689.9" cy="292.9" r="1.45"/><circle cx="706.0" cy="295.1" r="1.45"/><circle cx="722.1" cy="264.3" r="1.45"/><circle cx="738.2" cy="274.9" r="1.45"/><circle cx="754.3" cy="262.6" r="1.45"/><circle cx="770.3" cy="368.2" r="1.45"/></g>
<path d="M400.50,420.70 C400.50,420.70 409.04,421.10 416.58,421.10 C425.12,421.10 424.12,413.18 432.66,412.50 C440.20,411.90 440.85,411.90 448.74,411.90 C456.93,411.90 456.66,414.78 464.82,416.40 C472.74,417.98 472.83,418.30 480.90,418.30 C488.91,418.30 488.95,418.27 496.98,417.90 C505.03,417.52 505.20,417.90 513.06,416.80 C521.28,415.65 521.03,414.02 529.14,411.70 C537.11,409.42 537.08,409.07 545.22,407.60 C553.16,406.17 553.43,405.90 561.30,405.90 C569.51,405.90 569.35,408.43 577.38,411.00 C585.43,413.58 585.24,414.44 593.46,416.20 C601.32,417.89 602.47,417.90 609.54,417.90 C618.55,417.90 616.85,405.00 625.62,405.00 C632.93,405.00 633.40,411.00 641.70,411.00 C649.48,411.00 651.89,411.00 657.78,411.00 C667.97,411.00 665.67,388.30 673.86,388.30 C681.75,388.30 680.16,409.70 689.94,409.70 C696.24,409.70 697.70,403.93 706.02,403.50 C713.78,403.10 714.15,403.10 722.10,403.10 C730.23,403.10 730.35,406.50 738.18,406.50 C746.43,406.50 747.52,400.10 754.26,400.10 C763.60,400.10 770.34,417.90 770.34,417.90" fill="none" stroke="#4fd6c8" stroke-width="1.5" stroke-linejoin="round"/><g fill="#fff" stroke="#4fd6c8" stroke-width="1.2"><circle cx="400.5" cy="420.7" r="1.45"/><circle cx="416.6" cy="421.1" r="1.45"/><circle cx="432.7" cy="412.5" r="1.45"/><circle cx="448.7" cy="411.9" r="1.45"/><circle cx="464.8" cy="416.4" r="1.45"/><circle cx="480.9" cy="418.3" r="1.45"/><circle cx="497.0" cy="417.9" r="1.45"/><circle cx="513.1" cy="416.8" r="1.45"/><circle cx="529.1" cy="411.7" r="1.45"/><circle cx="545.2" cy="407.6" r="1.45"/><circle cx="561.3" cy="405.9" r="1.45"/><circle cx="577.4" cy="411.0" r="1.45"/><circle cx="593.5" cy="416.2" r="1.45"/><circle cx="609.5" cy="417.9" r="1.45"/><circle cx="625.6" cy="405.0" r="1.45"/><circle cx="641.7" cy="411.0" r="1.45"/><circle cx="657.8" cy="411.0" r="1.45"/><circle cx="673.9" cy="388.3" r="1.45"/><circle cx="689.9" cy="409.7" r="1.45"/><circle cx="706.0" cy="403.5" r="1.45"/><circle cx="722.1" cy="403.1" r="1.45"/><circle cx="738.2" cy="406.5" r="1.45"/><circle cx="754.3" cy="400.1" r="1.45"/><circle cx="770.3" cy="417.9" r="1.45"/></g>
<path d="M400.50,429.00 C400.50,429.00 408.54,428.90 416.58,428.90 C424.62,428.90 424.62,428.90 432.66,428.90 C440.70,428.90 440.70,428.80 448.74,428.80 C456.78,428.80 456.78,429.00 464.82,429.00 C472.86,429.00 472.86,429.00 480.90,429.00 C488.94,429.00 488.94,428.60 496.98,428.60 C505.02,428.60 505.03,429.00 513.06,429.00 C521.11,429.00 521.09,427.80 529.14,427.80 C537.17,427.80 537.18,428.60 545.22,428.60 C553.26,428.60 553.26,428.50 561.30,428.50 C569.34,428.50 569.34,428.80 577.38,428.90 C585.42,429.00 585.42,429.00 593.46,429.00 C601.50,429.00 601.50,429.00 609.54,429.00 C617.58,429.00 617.58,428.80 625.62,428.80 C633.66,428.80 633.67,428.80 641.70,428.80 C649.75,428.80 649.74,429.80 657.78,429.80 C665.82,429.80 665.81,428.60 673.86,428.60 C681.89,428.60 681.90,429.20 689.94,429.20 C697.98,429.20 697.98,428.80 706.02,428.80 C714.06,428.80 714.06,428.80 722.10,428.80 C730.14,428.80 730.14,428.90 738.18,428.90 C746.22,428.90 746.23,428.80 754.26,428.80 C762.31,428.80 770.34,429.80 770.34,429.80" fill="none" stroke="#35c25a" stroke-width="1.5" stroke-linejoin="round"/><g fill="#fff" stroke="#35c25a" stroke-width="1.2"><circle cx="400.5" cy="429.0" r="1.45"/><circle cx="416.6" cy="428.9" r="1.45"/><circle cx="432.7" cy="428.9" r="1.45"/><circle cx="448.7" cy="428.8" r="1.45"/><circle cx="464.8" cy="429.0" r="1.45"/><circle cx="480.9" cy="429.0" r="1.45"/><circle cx="497.0" cy="428.6" r="1.45"/><circle cx="513.1" cy="429.0" r="1.45"/><circle cx="529.1" cy="427.8" r="1.45"/><circle cx="545.2" cy="428.6" r="1.45"/><circle cx="561.3" cy="428.5" r="1.45"/><circle cx="577.4" cy="428.9" r="1.45"/><circle cx="593.5" cy="429.0" r="1.45"/><circle cx="609.5" cy="429.0" r="1.45"/><circle cx="625.6" cy="428.8" r="1.45"/><circle cx="641.7" cy="428.8" r="1.45"/><circle cx="657.8" cy="429.8" r="1.45"/><circle cx="673.9" cy="428.6" r="1.45"/><circle cx="689.9" cy="429.2" r="1.45"/><circle cx="706.0" cy="428.8" r="1.45"/><circle cx="722.1" cy="428.8" r="1.45"/><circle cx="738.2" cy="428.9" r="1.45"/><circle cx="754.3" cy="428.8" r="1.45"/><circle cx="770.3" cy="429.8" r="1.45"/></g>
</svg>
<div class="abs" id="dd" style="left:218.2px;top:81.3px;width:59.3px;height:231.2px;background:#fff;border-radius:2px;box-shadow:0 2px 9px rgba(0,0,0,0.16)">
<div class="abs" style="left:0;top:43.8px;width:59.3px;height:20.2px;background:#ebfafd"></div>
<div class="t" style="left:7.8px;top:9.4px;font-size:9px;color:#333">按年</div>
<div class="t" style="left:7.8px;top:30.0px;font-size:9px;color:#333">按季</div>
<div class="t" style="left:7.8px;top:50.6px;font-size:9px;color:#2a9fc0">按月</div>
<div class="t" style="left:7.8px;top:71.2px;font-size:9px;color:#333">按週</div>
<div class="t" style="left:7.8px;top:91.8px;font-size:9px;color:#333">按天</div>
<div class="t" style="left:7.8px;top:112.4px;font-size:9px;color:#333">按小時</div>
<div class="t" style="left:7.8px;top:133.0px;font-size:9px;color:#2a9fc0">日期格式</div>
<div class="t" style="left:7.8px;top:153.6px;font-size:9px;color:#333">重命名</div>
<div class="t" style="left:7.8px;top:174.2px;font-size:9px;color:#999">排序</div>
<div class="t" style="left:19.6px;top:194.8px;font-size:9px;color:#333">升序</div>
<div class="t" style="left:19.6px;top:215.4px;font-size:9px;color:#333">降序</div>
<svg width="4" height="6" viewBox="0 0 4 6" style="left:49px;top:133.6px" fill="none" stroke="#888" stroke-width="0.8"><path d="M0.5 0.5 L3.2 3 L0.5 5.5"/></svg>
</div>
<div class="abs" style="left:977.9px;top:418.4px;width:38.2px;height:38.2px;border-radius:50%;background:#1c7cd6;box-shadow:0 3px 7px rgba(28,124,214,0.45)"></div>
<svg width="40" height="40" viewBox="977 417.5 40 40" style="left:977px;top:417.5px"><path d="M997.5 424.8 A10.8 10.8 0 1 1 992.6 445.2 L987.4 449.2 L989.6 442.9 A10.8 10.8 0 0 1 997.5 424.8 Z" fill="none" stroke="#fff" stroke-width="2" stroke-linejoin="round"/><path d="M994.2 433.2 V436.8 M1002.2 433.2 V436.8" stroke="#fff" stroke-width="1.7" stroke-linecap="round"/><path d="M998.6 441.2 C1001 441.6 1003.4 441 1005.4 440" fill="none" stroke="#fff" stroke-width="1.4" stroke-linecap="round"/></svg>
</body>
</html>
